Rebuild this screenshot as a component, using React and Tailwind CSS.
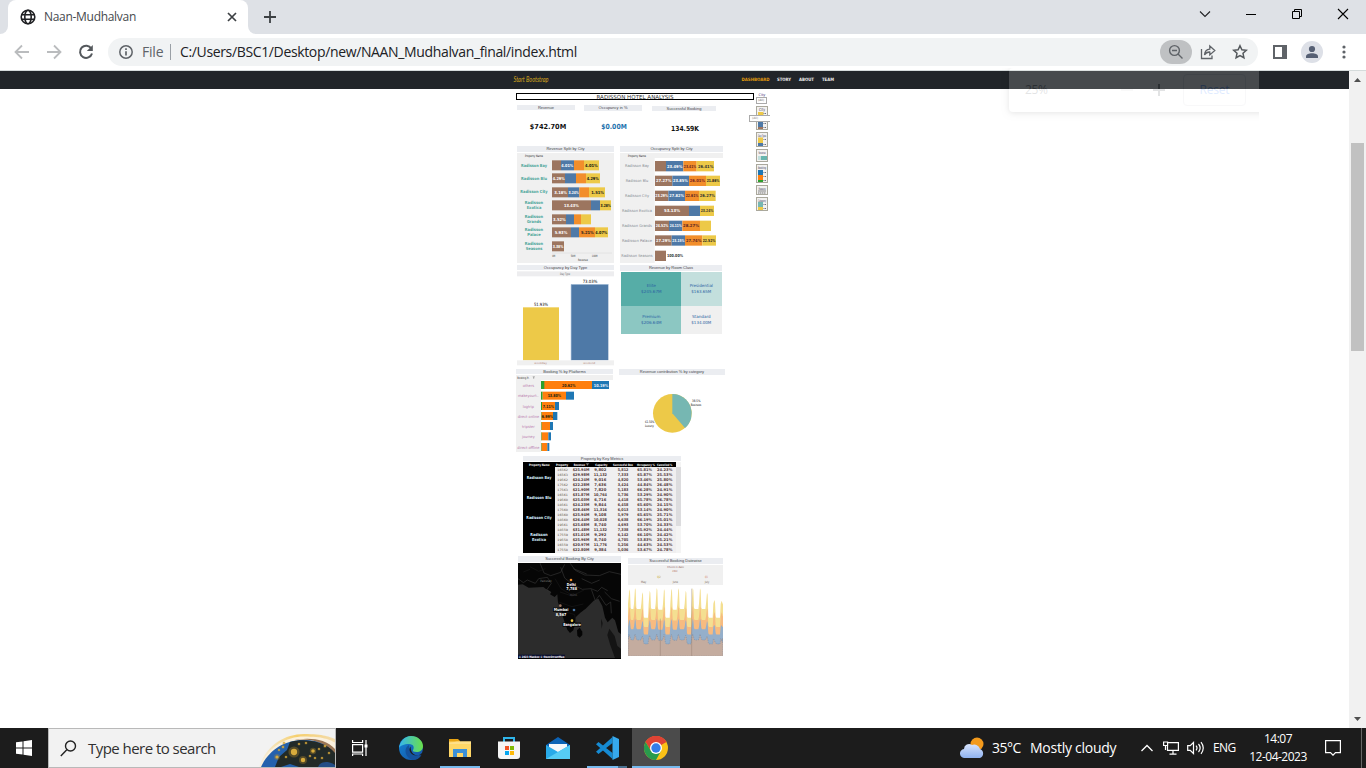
import React from "react";

const BROWN = "#9c755f", BLUE = "#4e79a7", ORANGE = "#f28e2b", YELLOW = "#edc948", TEAL = "#76b7b2";

function T({ x, y, w, size = 12, fill = "#333", bold, anchor = "middle", font = "DejaVu Sans, sans-serif", children }) {
  return (
    <text x={x} y={y} fontSize={size} fill={fill} fontWeight={bold ? 700 : 400} textAnchor={anchor} fontFamily={font}
      textLength={w} lengthAdjust="spacingAndGlyphs">{children}</text>
  );
}

/* ---------- browser chrome ---------- */
function TabStrip() {
  return (
    <div className="flex h-[34px] w-full shrink-0 items-stretch bg-[#dee1e6]">
      <div className="flex w-2 items-end bg-white"><div className="h-full w-2 rounded-br-lg bg-[#dee1e6]" /></div>
      <div className="flex w-60 items-center rounded-t-lg bg-white pl-3 pr-[11px]">
        <svg width="16" height="16" viewBox="0 0 16 16" fill="none" stroke="#202124" strokeWidth="1.6">
          <circle cx="8" cy="8" r="6.8" /><ellipse cx="8" cy="8" rx="3.2" ry="6.8" /><path d="M1.5 5.7h13M1.5 10.3h13" />
        </svg>
        <span className="ml-2 grow font-['Open_Sans',sans-serif] text-[12px] leading-4 tracking-[-0.3px] text-[#45494d]">Naan-Mudhalvan</span>
        <svg width="10" height="10" viewBox="0 0 10 10" stroke="#3c4043" strokeWidth="1.7"><path d="M1 1l8 8M9 1l-8 8" /></svg>
      </div>
      <div className="w-2 bg-white"><div className="h-full w-2 rounded-bl-lg bg-[#dee1e6]" /></div>
      <div className="flex grow items-center pl-2">
        <svg width="12" height="12" viewBox="0 0 12 12" stroke="#3c4043" strokeWidth="1.8"><path d="M6 0v12M0 6h12" /></svg>
      </div>
      <div className="flex items-start gap-[34px] pr-[17px] pt-[8px]">
        <svg width="12" height="12" viewBox="0 0 12 12" fill="none" stroke="#202124" strokeWidth="1.1"><path d="M1 3.5l5 5 5-5" /></svg>
        <svg width="12" height="12" viewBox="0 0 12 12" stroke="#000" strokeWidth="1"><path d="M1 6.5h10" /></svg>
        <svg width="12" height="12" viewBox="0 0 12 12" fill="none" stroke="#000" strokeWidth="1"><path d="M1.5 3.5h7v7h-7zM3.5 3.5v-2h7v7h-2" /></svg>
        <svg width="12" height="12" viewBox="0 0 12 12" stroke="#000" strokeWidth="1.1"><path d="M1 1l10 10M11 1L1 11" /></svg>
      </div>
    </div>
  );
}

function Toolbar() {
  return (
    <div className="flex h-[37px] w-full shrink-0 items-start border-b border-[#d5dbdb] bg-white pl-[14px] pr-5 pt-1 font-['Open_Sans',sans-serif]">
      <div className="flex h-7 w-[94px] items-center gap-4">
        <svg width="16" height="16" viewBox="0 0 16 16" fill="none" stroke="#babcbe" strokeWidth="1.8"><path d="M15 8H2M8 1.5L1.5 8 8 14.5" /></svg>
        <svg width="16" height="16" viewBox="0 0 16 16" fill="none" stroke="#babcbe" strokeWidth="1.8"><path d="M1 8h13M8 1.5L14.500 8 8 14.500" /></svg>
        <svg width="16" height="16" viewBox="0 0 16 16" fill="none" stroke="#54585c" strokeWidth="2"><path d="M13.300 4.500A6.100 6.100 0 1 0 14 9.500" /><path d="M14.800 1v6h-6z" fill="#54585c" stroke="none" /></svg>
      </div>
      <div className="flex h-7 w-[1150px] items-center rounded-full bg-[#f1f3f4] pl-[11px] pr-[10px]">
        <svg width="14" height="14" viewBox="0 0 14 14" fill="none" stroke="#5f6368" strokeWidth="1.500"><circle cx="7" cy="7" r="6.200" /><path d="M7 6.200v4.300M7 3.300v1.600" strokeWidth="1.700" /></svg>
        <span className="ml-[9px] w-[21px] text-[14px] leading-5 tracking-[-0.2px] text-[#5f6368]">File</span>
        <div className="ml-[7px] mr-[9px] h-4 w-px bg-[#9aa0a6]" />
        <span className="grow whitespace-nowrap text-[14px] leading-5 tracking-[-0.355px] text-[#202124]">C:/Users/BSC1/Desktop/new/NAAN_Mudhalvan_final/index.html</span>
        <div className="mr-[8px] flex h-6 w-8 items-center justify-center rounded-full bg-[#bfc1c3]">
          <svg width="16" height="16" viewBox="0 0 16 16" fill="none" stroke="#5f6368" strokeWidth="1.400"><circle cx="6.500" cy="6.500" r="4.900" /><path d="M4 6.500h5M10 10l4.500 4.500" /></svg>
        </div>
        <svg className="mr-4" width="16" height="16" viewBox="0 0 16 16" fill="none" stroke="#5f6368" strokeWidth="1.300"><path d="M1.500 5v9.500h10.500v-3" /><path d="M4.500 11C4.800 7.200 7 5.300 9.800 5.100V2l5 4.600-5 4.300V8C7.500 7.900 5.900 8.700 4.500 11z" /></svg>
        <svg width="16" height="16" viewBox="0 0 16 16" fill="none" stroke="#54585c" strokeWidth="1.500"><path d="M8 1.700l1.900 4.100 4.400.5-3.300 3 .9 4.400L8 11.500l-3.900 2.200.9-4.400-3.300-3 4.400-.5z" /></svg>
      </div>
      <div className="flex h-7 grow items-center justify-end">
        <svg className="mr-[14px]" width="14" height="14" viewBox="0 0 14 14"><path d="M0 0h14v14H0z" fill="#5f6368" /><path d="M2 2h7v10H2z" fill="#fff" /></svg>
        <svg width="22" height="22" viewBox="0 0 22 22"><circle cx="11" cy="11" r="11" fill="#dde0e7" /><circle cx="11" cy="8" r="3.100" fill="#566074" /><path d="M5 17v-1.500c0-2.200 3-3.200 6-3.200s6 1 6 3.200V17z" fill="#566074" /></svg>
        <svg className="ml-[19px]" width="4" height="14" viewBox="0 0 4 14" fill="#5f6368"><circle cx="2" cy="2" r="1.600" /><circle cx="2" cy="7" r="1.600" /><circle cx="2" cy="12" r="1.600" /></svg>
      </div>
    </div>
  );
}

function SiteNav() {
  return (
    <div className="flex h-[18px] w-full justify-center bg-[#212529] pr-px">
      <div className="flex w-[323px] items-start justify-between">
        <svg width="42" height="16" viewBox="0 0 42 16"><T x={0.5} y={10.5} w={35} size={7} fill="#d9a91c" anchor="start" font="Lato, sans-serif"><tspan fontStyle="italic">Start Bootstrap</tspan></T></svg>
        <svg width="96" height="16" viewBox="0 0 96 16">
          <T x={1.5} y={10.300} w={28} size={4.500} fill="#e09a0c" bold anchor="start">DASHBOARD</T>
          <T x={37} y={10.300} w={14} size={4.500} fill="#eee" bold anchor="start">STORY</T>
          <T x={59} y={10.300} w={15} size={4.500} fill="#eee" bold anchor="start">ABOUT</T>
          <T x={82} y={10.300} w={12} size={4.500} fill="#eee" bold anchor="start">TEAM</T>
        </svg>
      </div>
    </div>
  );
}

/* ---------- dashboard ---------- */
function Head({ children, className = "" }) {
  return <div className={"flex shrink-0 items-center justify-center whitespace-nowrap bg-[#ebedf1] font-['Liberation_Sans',sans-serif] text-[4px] leading-none text-[#44464a] " + className}>{children}</div>;
}

function SplitChart({ rows, start, height, textFill }) {
  return rows.map(([y, edges, labels], i) => {
    let x = start;
    return (
      <g key={i}>
        {edges.map((e, k) => {
          const r = e > x ? <rect key={k} x={x} y={y} width={e - x} height={height} fill={[BROWN, BLUE, ORANGE, YELLOW][k]} /> : null;
          x = Math.max(x, e);
          return r;
        })}
        {labels.map(([cx, t, w, c], k) => <T key={k} x={cx} y={y + height / 2 + 4.500} w={w} size={12.500} fill={c || textFill} bold>{t}</T>)}
      </g>
    );
  });
}

const revenueRows = [
  [60, [153, 192, 222, 267], [[172, "4.01%", 36, "#fff"], [244, "4.01%", 38, "#111"]]],
  [99, [165, 198, 228, 270], [[146, "4.29%", 36, "#fff"], [248, "4.29%", 36, "#111"]]],
  [141, [174, 208, 237, 285], [[152, "3.18%", 38, "#fff"], [191, "3.24%", 31, "#fff"], [263, "1.51%", 38, "#222"]]],
  [180, [243, 270, 270, 303], [[184, "13.43%", 44, "#fff"], [287, "3.28%", 31, "#111"]]],
  [222, [168, 192, 213, 243], [[148, "3.52%", 38, "#fff"]]],
  [261, [183, 207, 255, 294], [[153, "5.93%", 38, "#fff"], [232, "5.21%", 38, "#222"], [274, "4.07%", 36, "#111"]]],
  [303, [162], [[144, "3.38%", 32, "#fff"]]],
];
const occupancyRows = [
  [62, [468, 520, 560, 612], [[494, "23.49%", 46, "#fff"], [540, "23.41%", 37, "#622"], [587, "26.41%", 46, "#333"]]],
  [106, [487, 537, 588, 630], [[461, "27.27%", 46, "#fff"], [511, "23.85%", 44, "#fff"], [562, "26.01%", 46, "#722"], [609, "21.86%", 38, "#222"]]],
  [151, [475, 525, 567, 617], [[455, "23.29%", 38, "#fff"], [500, "27.82%", 44, "#fff"], [546, "22.61%", 38, "#522"], [592, "26.27%", 46, "#333"]]],
  [196, [537, 570, 570, 612], [[486, "53.13%", 48, "#fff"], [591, "23.24%", 38, "#333"]]],
  [241, [477, 517, 570, 603], [[456, "24.52%", 38, "#fff"], [497, "24.11%", 36, "#fff"], [543, "28.27%", 48, "#522"]]],
  [285, [485, 525, 577, 618], [[460, "27.29%", 44, "#fff"], [505, "23.15%", 36, "#fff"], [551, "27.74%", 46, "#522"], [597, "22.52%", 38, "#222"]]],
  [331, [468], [[495, "100.00%", 48, "#333"]]],
];

function RevenueSplit() {
  const labels = [[79, "Radisson Bay", 78], [118, "Radisson Blu", 78], [159, "Radisson City", 82], [192, "Radisson", 55], [207, "Exotica", 44], [233, "Radisson", 55], [248, "Grands", 42], [272, "Radisson", 55], [287, "Palace", 40], [314, "Radisson", 55], [329, "Seasons", 50]];
  return (
    <svg className="mt-px block" width="97" height="110" viewBox="21 38 291 330">
      <rect x="21" y="38" width="291" height="330" fill="#f0f0f0" />
      <T x={72} y={50} w={54} size={9} fill="#222">Property Name</T>
      {labels.map(([y, t, w], i) => <T key={i} x={72} y={y} w={w} size={12.500} bold fill="#4da69b">{t}</T>)}
      <SplitChart rows={revenueRows} start={126} height={30} textFill="#fff" />
      <path d="M126 338h180" stroke="#ddd" strokeWidth="2" />
      <T x={131} y={349} w={9} size={9}>0M</T><T x={189} y={349} w={14} size={9}>50M</T><T x={254} y={349} w={17} size={9}>100M</T>
      <T x={219} y={362} w={30} size={9}>Revenue</T>
    </svg>
  );
}

function OccupancySplit() {
  const names = ["Bay", "Blu", "City", "Exotica", "Grands", "Palace", "Seasons"];
  const widths = [72, 68, 72, 90, 90, 90, 94];
  return (
    <svg className="mt-px block" width="103" height="110" viewBox="330 38 309 330">
      <rect x="330" y="38" width="309" height="15" fill="#f0f0f0" />
      <rect x="330" y="53" width="104" height="315" fill="#f0f0f0" />
      <T x={381} y={50} w={54} size={9} fill="#222">Property Name</T>
      {names.map((n, i) => <T key={n} x={381} y={81 + i * 45} w={widths[i]} size={11.500} fill="#858a91">{"Radisson " + n}</T>)}
      <SplitChart rows={occupancyRows} start={435} height={31} textFill="#fff" />
    </svg>
  );
}

function DayType() {
  return (
    <svg className="mt-px block" width="97" height="95" viewBox="21 32 291 285">
      <rect x="21" y="33" width="291" height="15" fill="#ededef" />
      <T x={165} y={44} w={30} size={9} fill="#666">Day Type</T>
      <rect x="39" y="141" width="108" height="159" fill={YELLOW} />
      <rect x="183" y="72" width="112" height="228" fill="#4e79a7" />
      <path d="M183.500 300V72.500H295" stroke="#a3bdd8" strokeWidth="2" fill="none" />
      <T x={93} y={136} w={42} size={13} fill="#000">51.93%</T>
      <T x={240} y={69} w={44} size={13} fill="#000">73.03%</T>
      <rect x="21" y="300" width="291" height="15" fill="#f0f0f0" />
      <T x={92} y={311} w={38} size={8} fill="#b08578">weekday</T><T x={238} y={311} w={36} size={8} fill="#b08578">weekend</T>
    </svg>
  );
}

function RoomClass() {
  const cells = [
    [333, 36, 180, 102, "#56ada7", "Elite", "$245.67M", 28, 62, 424],
    [513, 36, 123, 102, "#c3dfdd", "Presidential", "$163.65M", 70, 60, 574],
    [333, 138, 180, 84, "#8cc7c2", "Premium", "$206.64M", 54, 62, 424],
    [513, 138, 123, 84, "#f0f0f0", "Standard", "$134.00M", 56, 60, 574],
  ];
  return (
    <svg className="ml-px mt-px block" width="101" height="62" viewBox="333 36 303 186">
      {cells.map(([x, y, w, h, c, a, b, wa, wb, cx]) => (
        <g key={a}><rect x={x} y={y} width={w} height={h} fill={c} />
          <T x={cx} y={y + h / 2 - 5} w={wa} size={12.500} fill="#2a62a2">{a}</T>
          <T x={cx} y={y + h / 2 + 11} w={wb} size={12.500} fill="#2a62a2">{b}</T></g>
      ))}
    </svg>
  );
}

function Platforms() {
  const rows = [
    [51, "others", 102, 246, 297, "20.62%", 176], [83, "makeyourt..", 98, 168, 192, "13.80%", 133], [114, "logtrip", 96, 135, 147, "7.11%", 115],
    [144, "direct online", 95, 129, 142, "6.99%", 112], [174, "tripster", 95, 120, 129], [205, "journey", 95, 115, 123], [237, "direct offline", 95, 112, 118],
  ];
  const widths = [34, 62, 34, 64, 38, 38, 66];
  return (
    <svg className="mt-px block" width="97" height="77" viewBox="18 33 291 231">
      <rect x="18" y="33" width="291" height="15" fill="#f0f0f0" /><rect x="18" y="48" width="75" height="216" fill="#f0f0f0" />
      <T x={41} y={45} w={38} size={9} fill="#222">Booking Pl..</T>
      <path d="M68 38h7M69 41h4M71 38v7" stroke="#666" strokeWidth="1" fill="none" />
      {rows.map(([y, n, g, o, b, t, cx], i) => (
        <g key={n}>
          <T x={55} y={y + 17} w={widths[i]} size={11.500} fill="#b878ac">{n}</T>
          <rect x={93} y={y} width={g - 93} height={24} fill="#2ca02c" />
          <rect x={g} y={y} width={o - g} height={24} fill="#ff7f0e" />
          <rect x={o} y={y} width={b - o} height={24} fill="#1f77b4" />
          {i < 1 && <rect x={g} y={y} width="3" height="24" fill="#b98a1c" />}
          {t && <T x={cx} y={y + 16.500} w={t.length * 6.700} size={12.500} bold fill="#221">{t}</T>}
        </g>
      ))}
      <T x={273} y={67.500} w={43} size={12.500} bold fill="#e8f2fa">10.19%</T>
    </svg>
  );
}

function CategoryPie() {
  return (
    <svg className="block" width="106" height="77" viewBox="327 33 318 231">
      <circle cx="487" cy="148" r="58" fill={YELLOW} />
      <path d="M487 148V90A58 58 0 0 1 525 192z" fill={TEAL} />
      <T x={559} y={114} w={26} size={10} fill="#000">38.5%</T><T x={558} y={125} w={32} size={10} fill="#000">Business</T>
      <T x={419} y={178} w={28} size={10} fill="#000">61.50%</T><T x={418} y={189} w={26} size={10} fill="#000">Luxury</T>
    </svg>
  );
}

const metrics = [
  "16562|$25.94M|9,802|5,812|65.81%|24.23%", "16563|$29.98M|11,132|7,333|65.87%|25.53%", "19562|$24.24M|9,016|4,820|53.46%|25.80%",
  "17562|$22.28M|7,636|3,424|44.84%|26.48%", "17563|$21.90M|7,820|5,183|66.28%|24.91%", "16561|$31.87M|10,764|5,736|53.29%|24.90%",
  "19560|$25.03M|6,716|4,418|65.78%|26.78%", "18561|$24.23M|9,844|6,458|65.60%|24.15%", "17560|$28.46M|11,316|6,013|53.14%|24.90%",
  "16560|$25.94M|9,108|5,979|65.65%|25.71%", "18560|$26.44M|10,028|6,638|66.19%|25.01%", "19561|$25.68M|8,740|4,693|53.70%|24.33%",
  "18559|$31.48M|11,132|7,338|65.92%|24.44%", "17559|$31.01M|9,292|6,142|66.10%|24.42%", "19558|$25.96M|8,740|4,705|53.83%|25.21%",
  "16559|$20.97M|11,776|5,256|44.63%|24.53%", "17558|$22.80M|9,384|5,036|53.67%|24.78%",
];
function KeyMetrics() {
  const cx = [158, 213, 271, 339, 404, 464], cw = [32, 50, 36, 32, 44, 46];
  const heads = ["Property", "Revenue", "Capacity", "Successful Boo", "Occupancy %", "Cancelled %"], hw = [36, 34, 36, 60, 54, 46];
  return (
    <svg className="mt-px block" width="158" height="91" viewBox="39 30 474 273">
      <rect x="39" y="30" width="459" height="273" fill="#f0eff0" />
      <path d="M39 30h459v15H135v258H39z" fill="#000" />
      <rect x="498" y="30" width="15" height="273" fill="#f4f4f4" /><rect x="498" y="45" width="15" height="177" fill="#dcdcde" />
      <T x={88} y={42} w={62} size={9} fill="#fff" bold>Property Name</T>
      {heads.map((h, i) => <T key={h} x={[156, 208, 274, 339, 408, 464][i]} y={42} w={hw[i]} size={9} fill="#fff" bold>{h}</T>)}
      <path d="M228 35h9M230 38h5M232 35v6" stroke="#fff" strokeWidth="1" />
      {[[80, "Radisson Bay", 74], [140, "Radisson Blu", 74], [200, "Radisson City", 76], [251, "Radisson", 52], [266, "Exotica", 42]].map(([y, t, w]) => <T key={y} x={87} y={y} w={w} size={12} fill="#d9f0ff" bold>{t}</T>)}
      {metrics.map((r, i) => r.split("|").map((v, k) => (
        <T key={i + "-" + k} x={cx[k]} y={55.500 + i * 15.150} w={k === 2 && v.length > 5 ? 40 : cw[k]} size={k ? 11.500 : 9} bold={k > 0} fill={k ? "#503636" : "#654"}>{v}</T>
      )))}
    </svg>
  );
}

function CityMap() {
  return (
    <svg className="mt-px block" width="103" height="96" viewBox="24 33 309 288">
      <rect x="24" y="33" width="309" height="288" fill="#2c2c2c" />
      <path d="M24 33H333V246l-8-6-10-35-8-8-14 14-8-14-8-35-12-22-14 6-24 24-16 12-14 14-3 25-4 14-10 8-8-10-10-28-10-32-8-22-2-24-8 8-14-8 4-6-16-10-8-6-44 2-18-10-22 2-8-8z" fill="#060606" />
      <path d="M201 235l8-8 8 12v10l-8 8-7-6z" fill="#050505" /><path d="M274 200l4 14-3 16-2-20zM298 230l16 22 8 30 11 8v31h-17l-16-44-8-28z" fill="#141414" />
      <path d="M24 80l16 12 12-8 24 10 10-14 26-4 12 18-14 20 12 6M90 33l12 30 20 8 30-10 12-24M152 46l12 32 25 20 28 14 26-2 20 8 12-12 18 10M180 33l16 22 28 14 44 2 30-12 35 8M244 112l12 34 12-16 20 30 14-10 2 34M284 120l20 20 25 8M190 50l40 16M215 80l30 14 24-10" stroke="#353535" strokeWidth="2" fill="none" />
      <path d="M135 80l18 30 30 18M150 120l36 12 36-18M146 150l40 14 34-8M168 180l26 8 6 36M60 44l26 14 20-8M40 60l20-8" stroke="#181818" strokeWidth="2" fill="none" />
      <T x={108} y={90} w={34} size={9} fill="#777">Pakistan</T><T x={190} y={131} w={22} size={9} fill="#555">INDIA</T>
      <circle cx="183" cy="84" r="4" fill="#f28e2b" /><circle cx="151" cy="161" r="4" fill="#9c755f" /><circle cx="192" cy="174" r="4" fill="#4e79a7" /><circle cx="186" cy="206" r="4" fill="#edc948" />
      <T x={184} y={101} w={27} size={12} bold fill="#fff">Delhi</T><T x={185} y={114} w={32} size={12} bold fill="#fff">7,788</T>
      <rect x="129" y="167" width="46" height="12" fill="#000" /><T x={153} y={178} w={44} size={12} bold fill="#fff">Mumbai</T><T x={153} y={192} w={32} size={12} bold fill="#fff">8,567</T>
      <rect x="158" y="212" width="55" height="12" fill="#000" /><T x={186} y={222} w={53} size={12} bold fill="#fff">Bangalore</T>
      <rect x="24" y="308" width="141" height="10" fill="#0b1030" />
      <T x={26} y={316.500} w={137} size={9} bold anchor="start" fill="#fff">© 2023 Mapbox © OpenStreetMap</T>
      <rect x="24" y="318" width="309" height="3" fill="#000" />
    </svg>
  );
}

const peaks = [358, 375, 397, 419, 440, 462, 484, 505, 527, 548, 570, 591, 613, 635];
const tops = [112, 108, 121, 116, 108, 111, 110, 109, 116, 108, 109, 122, 144, 146];
const dips = [0, 0, 26, 0, 2, 26, 2, 0, 26, 0, 0, 26, 26, 0];
function area(base, lift, dipScale) {
  let d = "M354 312V" + (base - lift);
  peaks.forEach((p, i) => {
    const peakY = lift > 50 ? tops[i] : base - lift + (tops[i] - 108) * 0.5;
    const n = i < peaks.length - 1 ? peaks[i + 1] : 639;
    const b = base + dips[i] * dipScale;
    d += ` L${p - 3} ${base - lift * 0.25} L${p} ${peakY} L${p + 2} ${peakY + 6} L${p + 4} ${b - 4} L${p + 6} ${b} L${Math.min(n - 5, 637)} ${b}`;
  });
  return d + " L639 " + (base - lift * 0.3) + "V312z";
}
function Datewise() {
  return (
    <svg className="mt-px block" width="95" height="91" viewBox="354 39 285 273">
      <rect x="354" y="39" width="285" height="60" fill="#f0f0f0" />
      <T x={497} y={48} w={50} size={8} fill="#855">Check in date</T><T x={495} y={61} w={16} size={8} fill="#a54">2022</T>
      <T x={447} y={79} w={10} size={9} fill="#b90">Q2</T><T x={589} y={79} w={8} size={9} fill="#c64">Q3</T>
      <T x={401} y={94} w={16} size={9} fill="#765">May</T><T x={496} y={94} w={16} size={9} fill="#765">June</T><T x={591} y={94} w={14} size={9} fill="#765">July</T>
      <path d={area(171, 62, 1)} fill="#f4df91" />
      <path d={area(204, 42, 0.8)} fill="#f7bb80" />
      <path d={area(232, 32, 0.6)} fill="#95afca" />
      <path d={area(264, 18, 0.45)} fill="#c4ac9f" />
      <path d={area(264, 18, 0.45)} fill="none" stroke="#7089a5" strokeWidth="1.500" strokeDasharray="4 3" />
      <path d="M354 312h285" stroke="#c4ac9f" strokeWidth="3" />
      <path d="M451 200V312M545 110V312" stroke="#8d7668" strokeWidth="2" opacity=".55" />
    </svg>
  );
}

function SideBox({ h, mt, children }) {
  return <div className="w-3 shrink-0 border border-[#aaa89c] bg-[#f3f2f0]" style={{ height: h, marginTop: mt }}><svg className="block" width="10" height={h - 2} viewBox={`0 0 10 ${h - 2}`}>{children}</svg></div>;
}
const ticks = (x, ys, w = 3) => ys.map((y) => <path key={y} d={`M${x} ${y}h${w}`} stroke="#6c7180" strokeWidth="1" strokeDasharray="1 .5" />);
function Sidebar() {
  return (
    <div className="relative ml-[2px] flex w-3 flex-col font-['DejaVu_Sans',sans-serif]">
      <span className="h-[4px] text-center text-[3.500px] leading-[4px] text-[#44337a]">City</span>
      <div className="h-[7px] w-[11px] border border-[#aaa] bg-white pl-[1px] text-[3px] leading-[5px] text-[#555]">(All)</div>
      <SideBox h={24} mt={2}><T x={5} y={4} w={6} size={4} fill="#335">City</T><rect x="1" y="5" width="5.500" height="5" fill={YELLOW} /><rect x="1" y="15" width="5" height="5" fill={BLUE} /><rect x="1" y="20" width="5" height="2" fill={BROWN} />{ticks(6.500, [6.500, 16.500, 20.500])}</SideBox>
      <div className="absolute left-[-7px] top-[22px] h-[7px] w-[21px] border border-r-0 border-[#aaa] bg-white pl-[2px] text-[3px] leading-[5px] text-[#777]">(All)</div>
      <SideBox h={15} mt={2}><T x={5} y={3.500} w={8} size={3.500} fill="#335">Day Type</T><rect x="1" y="4.500" width="5" height="5.500" fill={YELLOW} /><rect x="1" y="10" width="5" height="3" fill={BLUE} />{ticks(6.500, [6.500, 11.500])}</SideBox>
      <SideBox h={13} mt={2}><T x={5} y={3.500} w={7} size={3.500} fill="#335">Revenue</T><rect x="1" y="6" width="9" height="4" fill="#68b5ae" /><rect x="1" y="6" width="3" height="4" fill="#c3dfdd" /></SideBox>
      <SideBox h={19} mt={2}><T x={5} y={3.500} w={8} size={3.500} fill="#335">Booking</T><rect x="1" y="5" width="5" height="5" fill="#1f77b4" /><rect x="1" y="10" width="5" height="5" fill="#ff7f0e" /><rect x="1" y="15" width="5" height="2" fill="#2ca02c" />{ticks(6.500, [7.500, 11.500, 15.500])}</SideBox>
      <SideBox h={10} mt={2}><T x={5} y={3.500} w={7} size={3.500} fill="#335">Measure</T><rect x="1" y="4" width="8" height="2" fill="#bbb" /><path d="M1 7h8" stroke="#777" strokeDasharray="1.500 .5" /></SideBox>
      <SideBox h={14} mt={2}><T x={5} y={3.500} w={8} size={3.500} fill="#335">Category</T><rect x="1" y="4" width="5" height="5" fill={TEAL} /><rect x="1" y="9" width="5" height="3" fill={YELLOW} />{ticks(6.500, [6.500, 10.500])}</SideBox>
    </div>
  );
}

function Dashboard() {
  return (
    <div className="ml-[516px] mt-1 flex w-[254px] items-start">
      <div className="flex w-[238px] flex-col">
        <div className="flex h-[7px] items-center justify-center border border-black bg-white">
          <svg width="78" height="7" viewBox="0 0 78 7" className="shrink-0 overflow-visible"><T x={39} y={5.600} w={77} size={5.600} fill="#333">RADISSON HOTEL ANALYSIS</T></svg>
        </div>
        <div className="flex h-[46px] items-start pl-px pt-[5px]">
          <div className="w-[58px]"><Head className="h-[5px]">Revenue</Head>
            <svg className="mt-[11px] block" width="58" height="12"><T x={31} y={8} w={36.500} size={7} bold fill="#111">$742.70M</T></svg></div>
          <div className="ml-[9px] w-[58px]"><Head className="h-[6px]">Occupancy in %</Head>
            <svg className="mt-[10px] block" width="58" height="12"><T x={30} y={8} w={25.500} size={7} bold fill="#2272ad">$0.00M</T></svg></div>
          <div className="ml-[10px] w-16 pt-px"><Head className="h-[5px]">Successful Booking</Head>
            <svg className="mt-[12px] block" width="64" height="12"><T x={33} y={8} w={28} size={7} bold fill="#111">134.59K</T></svg></div>
        </div>
        <div className="flex h-[117px] items-start gap-[6px] pl-px">
          <div className="w-[97px]"><Head className="h-[6px]">Revenue Split by City</Head><RevenueSplit /></div>
          <div className="w-[103px]"><Head className="h-[6px]">Occupancy Split by City</Head><OccupancySplit /></div>
        </div>
        <div className="flex h-[105px] items-start gap-[6px] pl-px pt-[2px]">
          <div className="w-[97px]"><Head className="h-[5px]">Occupancy by Day Type</Head><DayType /></div>
          <div className="w-[102px]"><Head className="h-[6px]">Revenue by Room Class</Head><RoomClass /></div>
        </div>
        <div className="flex h-[85px] items-start gap-[6px] pt-px">
          <div className="w-[97px]"><Head className="h-[5px]">Booking % by Platforms</Head><Platforms /></div>
          <div className="w-[106px]"><Head className="h-[6px]">Revenue contribution % by category</Head><CategoryPie /></div>
        </div>
        <div className="h-[102px] w-[165px] pl-[7px] pt-[3px]"><Head className="h-[5px]">Property by Key Metrics</Head><KeyMetrics /></div>
        <div className="flex h-[105px] items-start gap-[7px] pl-[2px] pt-px">
          <div className="w-[103px]"><Head className="h-[6px]">Successful Booking By City</Head><CityMap /></div>
          <div className="w-[95px] pt-[2px]"><Head className="h-[6px]">Successful Booking Datewise</Head><Datewise /></div>
        </div>
      </div>
      <Sidebar />
    </div>
  );
}

function ZoomBubble() {
  return (
    <div className="absolute left-[1001px] top-[68px] h-[54px] w-[258px] overflow-hidden pl-2">
      <div className="flex h-11 w-[262px] items-center rounded-l-sm bg-white pl-4 font-['Open_Sans',sans-serif] text-[12px] opacity-[0.17] shadow-[0_1px_6px_rgba(0,0,0,0.6)]">
        <span className="w-24 tracking-[-0.3px] text-[#606368]">25%</span>
        <div className="h-0.5 w-3 bg-[#ddd]" />
        <svg className="ml-5" width="12" height="12" viewBox="0 0 12 12" stroke="#5c6063" strokeWidth="2"><path d="M6 0v12M0 6h12" /></svg>
        <div className="ml-[18px] flex h-8 w-[63px] items-center justify-center rounded border border-[#dadce0] tracking-[-0.2px] text-[#4a8cff]">Reset</div>
      </div>
    </div>
  );
}

function Scrollbar() {
  return (
    <div className="flex w-[17px] shrink-0 flex-col items-center bg-[#f1f1f1]">
      <svg width="17" height="17" viewBox="0 0 17 17"><path d="M5 11h7L8.500 7z" fill="#505050" /></svg>
      <div className="mt-[55px] h-[208px] w-[13px] bg-[#c1c1c1]" />
      <div className="grow" />
      <svg width="17" height="17" viewBox="0 0 17 17"><path d="M5 6h7l-3.500 4z" fill="#505050" /></svg>
    </div>
  );
}

/* ---------- taskbar ---------- */
function SearchArt() {
  const dots = [[35, 23, 3.500], [54, 22, 2], [44, 31, 2.500], [25, 14, 1], [33, 9, 0], [18, 28, 1.800], [20, 21, 1], [47, 14, 1], [60, 20, 1], [66, 17, 1.200], [70, 24, 1], [40, 15, 1], [27, 28, 1], [56, 29, 1], [24, 18, 1.200], [63, 29, 1], [51, 27, 1]];
  return (
    <svg className="h-[38px] w-[76px] shrink-0" viewBox="0 0 76 38">
      <defs><linearGradient id="halo"><stop stopColor="#f5f0e4" /><stop offset=".5" stopColor="#f6cf6d" /><stop offset="1" stopColor="#f3dcae" /></linearGradient></defs>
      <path d="M0 38C7 17 25 5 45 5s26 3 31 5v28z" fill="url(#halo)" /><path d="M1 38C8 19 26 7.500 45 7.500s25 3 31 6v24z" fill="#faf0dd" />
      <path d="M2 38C9 22 25 11 44 11s25 5 32 12v15z" fill="#2461ad" />
      <path d="M31 13c14-4 34-1 45 10v15H40l-9-3-9 3h-6l4-10 8-7z" fill="#222a28" /><path d="M32 12c15-4 34 0 44 12v-4C66 9 47 8 32 12z" fill="#9b7656" />
      <path d="M59 38c2-5 9-7 17-2v2z" fill="#234d86" />
      {dots.map(([x, y, r], i) => <g key={i}><circle cx={x} cy={y} r={r * 1.600} fill="#b58a28" opacity=".35" /><circle cx={x} cy={y} r={r * 0.900} fill="#d8ab3c" /></g>)}
    </svg>
  );
}

function App24({ children, className = "", line = "" }) {
  return (
    <div className={"flex h-10 w-12 flex-col items-center " + className}>
      <svg className="mt-2 shrink-0" width="24" height="24" viewBox="0 0 24 24">{children}</svg>
      <div className={"mt-1.5 h-0.5 shrink-0 " + line} />
    </div>
  );
}

function Taskbar() {
  return (
    <div className="flex h-10 w-full shrink-0 items-center bg-[#1c1c1c] font-['Open_Sans',sans-serif] text-white">
      <div className="flex w-12 justify-center"><svg width="16" height="16" viewBox="0 0 16 16" fill="#fff"><path d="M0 2.300l6.500-.9v6.100H0zM7.500 1.200L16 0v7.500H7.500zM0 8.500h6.500v6.100L0 13.700zM7.500 8.500H16V16l-8.500-1.200z" /></svg></div>
      <div className="flex h-10 w-72 items-center border border-[#b9b9b9] bg-[#f2f2f2] pl-[11px]">
        <svg width="17" height="17" viewBox="0 0 17 17" fill="none" stroke="#222" strokeWidth="1.400"><circle cx="10.500" cy="6" r="5" /><path d="M6.800 9.700L.8 16" /></svg>
        <span className="ml-[11px] grow whitespace-nowrap text-[15px] leading-5 tracking-[-0.54px] text-[#303030]">Type here to search</span>
        <SearchArt />
      </div>
      <div className="flex w-12 justify-center">
        <svg width="16" height="16" viewBox="0 0 16 16" fill="none" stroke="#fff" strokeWidth="1.200"><path d="M.6 4.600h10v7.500H.6zM.6 0v2.500h10V0M.6 16v-2h10v2M14 0v16" /><path d="M12.500 4.500h3v3h-3z" fill="#fff" stroke="none" /></svg>
      </div>
      <div className="ml-[3px] flex gap-px">
        <App24>
          <defs><linearGradient id="edgeTop" x1="0" x2="1"><stop stopColor="#36b5ef" /><stop offset="1" stopColor="#69e04a" /></linearGradient><linearGradient id="edgeBottom" x1="0" y1="0" x2="1" y2="1"><stop stopColor="#1386d8" /><stop offset="1" stopColor="#164f9e" /></linearGradient></defs>
          <circle cx="12" cy="12" r="12" fill="url(#edgeBottom)" />
          <path d="M0 12C1 5 6 0 12 0c7 0 12 5 12 10 0 4-3 6-6.500 6-3 0-4-1-3.500-2 1.500-2 1-6-4-6-5 0-9 2-10 4z" fill="url(#edgeTop)" />
          <path d="M10 9c-6 3-4 13 4 15 4 0 7-2 8.500-5C18 21 9.500 18 10 9z" fill="#14529d" />
          <path d="M11.500 10.500c-3 4 1 9 6 9 3 0 5-1.500 6-3l.5 2.500-6 5c4-1 5-4 5-5.500-5 2-11 1-11.500-8z" fill="#1c1c1c" />
        </App24>
        <App24 line="w-10 bg-[#76b9ed]">
          <path d="M1 3h9l2 2v4H1z" fill="#e8a414" /><path d="M1 5.500h22V21H1z" fill="#ffd767" /><path d="M1 7l8-1.500h14V8H1z" fill="#ffe08a" /><path d="M5 13h14v8h-4v-4H9v4H5z" fill="#3c91d8" />
        </App24>
        <App24>
          <path d="M7 6V2h10v4" fill="none" stroke="#2fb5ea" strokeWidth="2" /><path d="M1 5.500h22V20q0 3-3 3H4q-3 0-3-3z" fill="#f5f5f5" />
          <path d="M8 10h4v4H8z" fill="#f05325" /><path d="M13 10h4v4h-4z" fill="#80bb04" /><path d="M8 15h4v4H8z" fill="#05a6f0" /><path d="M13 15h4v4h-4z" fill="#ffba08" />
        </App24>
        <App24>
          <path d="M0 9L12 1l12 8v8H0z" fill="#0c63b6" /><path d="M3 8h18v8H3z" fill="#f5f7fa" /><path d="M0 9l12 7L24 9v14H0z" fill="#29aae9" /><path d="M0 23L24 9v14z" fill="#56ccf5" />
        </App24>
        <App24 line="w-10 bg-[linear-gradient(90deg,#76b9ed_78%,#49708f_78%)]">
          <path d="M17.500 1v22L1 8.200 3.500 6l14 11V7l-14 11L1 15.800z" fill="#168bd3" /><path d="M17.500 0L24 3v18l-6.500 3z" fill="#36a9ed" />
        </App24>
        <App24 className="bg-[#4b4b4b]" line="w-12 bg-[#76b9ed]">
          <circle cx="12" cy="12" r="12" fill="#fbc116" /><path d="M12 12L1.600 6A12 12 0 0 1 22.400 6z" fill="#df4335" /><path d="M12 6h10.400A12 12 0 0 0 1.600 6L7 15z" fill="#df4335" />
          <path d="M1.600 6A12 12 0 0 0 12 24l5-9-5 3-5-3z" fill="#299b4d" /><circle cx="12" cy="12" r="6" fill="#fff" /><circle cx="12" cy="12" r="4.700" fill="#347dea" />
        </App24>
      </div>
      <div className="grow" />
      <svg width="24" height="22" viewBox="0 0 24 22">
        <defs><linearGradient id="cloud" x2="0" y2="1"><stop stopColor="#d8e4fc" /><stop offset="1" stopColor="#8fb2f0" /></linearGradient></defs>
        <circle cx="17" cy="7" r="6.500" fill="#f39a1c" /><path d="M5 21a4.500 4.500 0 0 1-1-9 5 5 0 0 1 8-4 6 6 0 0 1 8 4 4.800 4.800 0 0 1 0 9z" fill="url(#cloud)" />
      </svg>
      <span className="ml-2 w-[38px] whitespace-nowrap text-[14px] leading-5 tracking-[-0.5px]">35°C</span>
      <span className="w-[111px] whitespace-nowrap text-[14px] leading-5 tracking-[-0.26px]">Mostly cloudy</span>
      <svg width="12" height="8" viewBox="0 0 12 8" fill="none" stroke="#fff" strokeWidth="1.300"><path d="M.5 7L6 1.500 11.500 7" /></svg>
      <svg className="ml-[10px]" width="16" height="14" viewBox="0 0 16 14" fill="none" stroke="#fff" strokeWidth="1.200"><path d="M5 1.600h10.400v7.800H4.500V5M10 9.500v3.500M6.500 13.200h7M.6 1h4v3.500h-4zM2.500 4.500V9" /></svg>
      <svg className="ml-2" width="17" height="14" viewBox="0 0 17 14" fill="none" stroke="#fff" strokeWidth="1.200"><path d="M.7 4.700h2.500L6.500 1.500v11L3.200 9.300H.7zM9 4.700q2 2.300 0 4.600M11.500 3q3.300 4 0 8M14 1.200q4.500 5.800 0 11.600" /></svg>
      <span className="ml-[9px] w-[29px] text-[12px] leading-5 tracking-[-0.6px]">ENG</span>
      <div className="flex w-[72px] flex-col items-center whitespace-nowrap text-[12px] leading-[18px] tracking-[-0.5px]"><span>14:07</span><span>12-04-2023</span></div>
      <svg className="ml-[11px]" width="16" height="16" viewBox="0 0 16 16" fill="none" stroke="#fff" strokeWidth="1.200"><path d="M.6.600h14.800v12H10.500L8 15.200 5.500 12.600H.6z" /></svg>
      <div className="ml-5 mr-1 h-10 w-px bg-[#666]" />
    </div>
  );
}

export default function App() {
  return (
    <div className="relative flex h-[768px] w-[1366px] flex-col overflow-hidden bg-white">
      <TabStrip />
      <Toolbar />
      <div className="flex min-h-0 grow">
        <div className="min-w-0 grow overflow-hidden bg-white"><SiteNav /><Dashboard /></div>
        <Scrollbar />
      </div>
      <Taskbar />
      <ZoomBubble />
    </div>
  );
}
